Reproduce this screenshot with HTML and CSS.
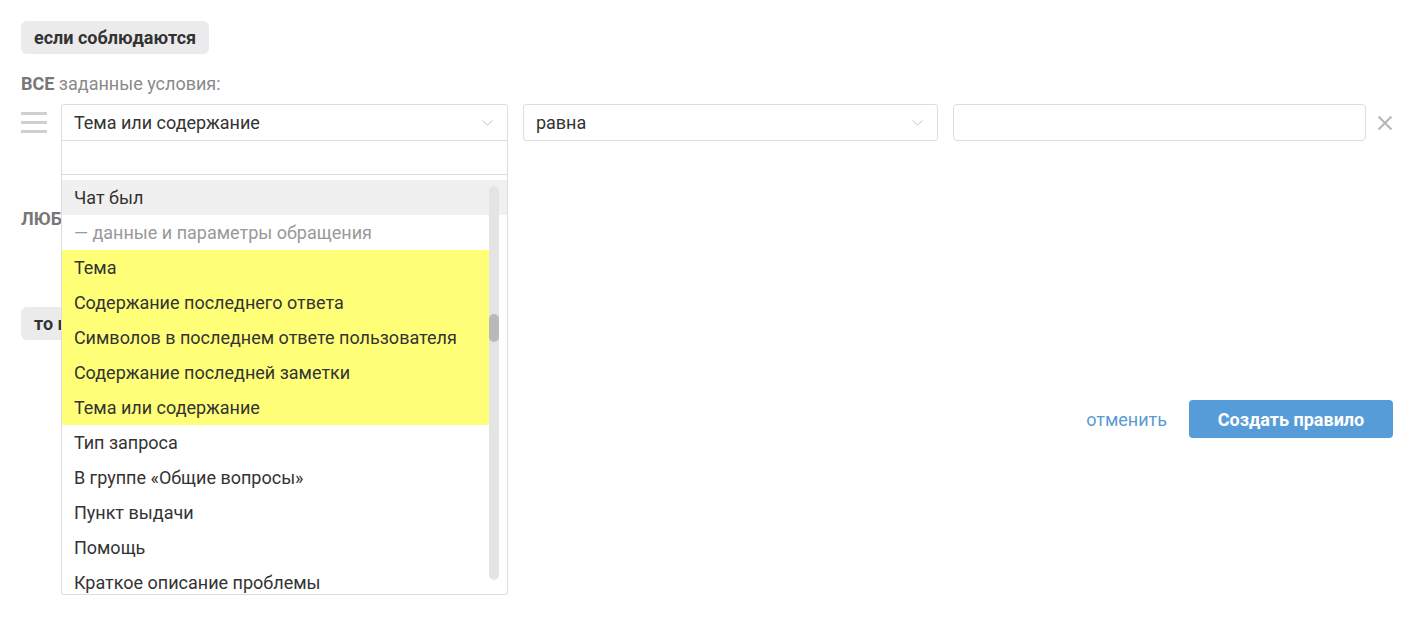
FILE: index.html
```html
<!DOCTYPE html>
<html lang="ru">
<head>
    <meta charset="UTF-8">
    <meta name="viewport" content="width=device-width, initial-scale=1.0">
    <title>Создать правило</title>
    <link rel="stylesheet" href="styles.css">
</head>
<body>
    <div class="page">
        <div class="badge">если соблюдаются</div>

        <div class="caption"><b>ВСЕ</b> заданные условия:</div>

        <div class="cond-row">
            <div class="handle">
                <span></span><span></span><span></span>
            </div>

            <div class="field-wrap">
                <div class="select first">
                    <span>Тема или содержание</span>
                    <svg class="chevron" width="11" height="6" viewBox="0 0 11 6"><polyline points="0.5,0.5 5.5,5 10.5,0.5" fill="none" stroke="#c4c4c4" stroke-width="1"/></svg>
                </div>

                <div class="dropdown">
                    <div class="dd-search"></div>
                    <ul class="dd-list">
                        <li class="hover">Чат был</li>
                        <li class="group">— данные и параметры обращения</li>
                        <li class="mark">Тема</li>
                        <li class="mark">Содержание последнего ответа</li>
                        <li class="mark">Символов в последнем ответе пользователя</li>
                        <li class="mark">Содержание последней заметки</li>
                        <li class="mark">Тема или содержание</li>
                        <li>Тип запроса</li>
                        <li>В группе «Общие вопросы»</li>
                        <li>Пункт выдачи</li>
                        <li>Помощь</li>
                        <li>Краткое описание проблемы</li>
                    </ul>
                    <div class="scroll-track"><div class="scroll-thumb"></div></div>
                </div>
            </div>

            <div class="select second">
                <span>равна</span>
                <svg class="chevron" width="11" height="6" viewBox="0 0 11 6"><polyline points="0.5,0.5 5.5,5 10.5,0.5" fill="none" stroke="#c4c4c4" stroke-width="1"/></svg>
            </div>

            <input type="text" class="value-input">

            <svg class="remove" width="16" height="16" viewBox="0 0 16 16"><path d="M1.5 1.5 L14.5 14.5 M14.5 1.5 L1.5 14.5" stroke="#b5b5b5" stroke-width="2" fill="none"/></svg>
        </div>

        <div class="caption second-caption"><b>ЛЮБЫЕ</b> заданные условия:</div>

        <div class="badge then-badge">то выполнить</div>

        <div class="actions">
            <a href="#" class="cancel">отменить</a>
            <button class="create">Создать правило</button>
        </div>
    </div>
</body>
</html>
```

FILE: styles.css
```css
body {
    margin: 0;
    font-family: Roboto, "Liberation Sans", Arial, sans-serif;
    font-size: 18px;
    color: #333;
    background: #fff;
}

.page {
    box-sizing: border-box;
    min-height: 618px;
    padding: 21px 20px 0 21px;
}

.badge {
    display: inline-block;
    height: 33px;
    line-height: 33px;
    padding: 0 13px;
    background: #ebebeb;
    border-radius: 6px;
    font-weight: bold;
    color: #333;
}

.caption {
    margin-top: 20px;
    line-height: 20px;
    color: #8a8a8a;
}

.caption b {
    color: #777;
}

.cond-row {
    display: flex;
    align-items: center;
    margin-top: 10px;
}

.handle {
    display: flex;
    flex-direction: column;
    gap: 6px;
    width: 26px;
    margin-right: 14px;
}

.handle span {
    display: block;
    height: 3px;
    background: #d0d0d0;
}

.field-wrap {
    position: relative;
}

.select {
    box-sizing: border-box;
    height: 37px;
    display: flex;
    align-items: center;
    justify-content: space-between;
    padding: 0 14px 0 12px;
    border: 1px solid #ddd;
    border-radius: 3px;
    background: #fff;
}

.select.first {
    width: 447px;
    border-radius: 3px 3px 0 0;
}

.select.second {
    width: 416px;
    margin-left: 15px;
}

.chevron {
    display: block;
}

.value-input {
    box-sizing: border-box;
    width: 415px;
    height: 37px;
    margin-left: 15px;
    border: 1px solid #ddd;
    border-radius: 4px;
}

.remove {
    margin-left: 11px;
}

.dropdown {
    position: absolute;
    left: 0;
    top: 37px;
    box-sizing: border-box;
    width: 447px;
    height: 454px;
    border: 1px solid #ddd;
    border-top: none;
    border-radius: 0 0 3px 3px;
    background: #fff;
    overflow: hidden;
    z-index: 5;
}

.dd-search {
    height: 33px;
    border-bottom: 1px solid #ddd;
}

.dd-list {
    list-style: none;
    margin: 0;
    padding: 5px 0 0 0;
}

.dd-list li {
    height: 35px;
    line-height: 35px;
    padding-left: 12px;
    white-space: nowrap;
}

.dd-list li.hover {
    background: #f0f0f0;
}

.dd-list li.group {
    color: #999;
}

.dd-list li.mark {
    background: #ffff78;
    margin-right: 18px;
}

.scroll-track {
    position: absolute;
    left: 427px;
    top: 45px;
    width: 10px;
    height: 394px;
    border-radius: 5px;
    background: #e4e4e4;
}

.scroll-thumb {
    margin-top: 128px;
    height: 28px;
    border-radius: 5px;
    background: #b9b9b9;
}

.second-caption {
    margin-top: 68px;
}

.then-badge {
    margin-top: 78px;
}

.actions {
    display: flex;
    justify-content: flex-end;
    align-items: center;
    gap: 22px;
    margin-top: 60px;
}

.cancel {
    color: #5b9bd5;
    text-decoration: none;
}

.create {
    height: 38px;
    width: 204px;
    border: none;
    border-radius: 4px;
    background: #569cd9;
    color: #fff;
    font-family: inherit;
    font-size: 18px;
    font-weight: bold;
}
```
